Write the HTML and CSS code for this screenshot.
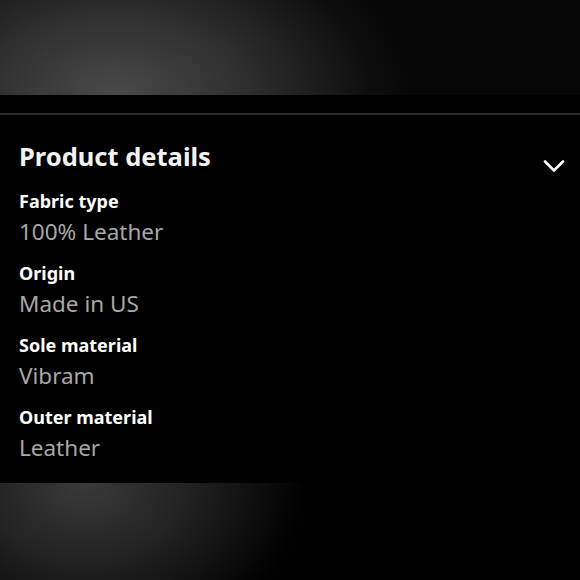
FILE: index.html
```html
<!DOCTYPE html>
<html lang="en">
<head>
  <meta charset="UTF-8" />
  <meta name="viewport" content="width=device-width, initial-scale=1.0" />
  <title>Product details</title>
  <link rel="stylesheet" href="styles.css">
</head>
<body>
  <div class="glow glow-top"></div>
  <div class="spacer"></div>

  <section class="details">
    <div class="details-head">
      <h2>Product details</h2>
      <svg class="chevron" width="22" height="14" viewBox="0 0 22 14">
        <path d="M2 3.5 L11 12.5 L20 3.5" fill="none" stroke="#fff" stroke-width="2.6" stroke-linecap="round" stroke-linejoin="round"/>
      </svg>
    </div>

    <dl class="spec-list">
      <div class="spec">
        <dt>Fabric type</dt>
        <dd>100% Leather</dd>
      </div>
      <div class="spec">
        <dt>Origin</dt>
        <dd>Made in US</dd>
      </div>
      <div class="spec">
        <dt>Sole material</dt>
        <dd>Vibram</dd>
      </div>
      <div class="spec">
        <dt>Outer material</dt>
        <dd>Leather</dd>
      </div>
    </dl>
  </section>

  <div class="glow glow-bottom"></div>
</body>
</html>
```

FILE: styles.css
```css
body {
  margin: 0;
  background: #000;
  color: #fff;
  font-family: 'Noto Sans', 'Open Sans', Arial, sans-serif;
  width: 580px;
  height: 580px;
  overflow: hidden;
}

/* blurred product photo areas */
.glow {
  width: 100%;
}

.glow-top {
  height: 95px;
  background: radial-gradient(ellipse 300px 190px at 115px 95px, #4a4a4a 0%, #2e2e2e 45%, #0e0e0e 85%, #060606 100%);
}

.glow-bottom {
  height: 97px;
  background: radial-gradient(ellipse 220px 170px at 85px 0px, #3a3a3a 0%, #232323 45%, #080808 88%, #000 100%);
}

.spacer {
  height: 18px;
  border-bottom: 2px solid #2a2b2f;
}

.details {
  padding: 25px 15px 0 19px;
  height: 368px;
  box-sizing: border-box;
}

.details-head {
  display: flex;
  align-items: flex-start;
  justify-content: space-between;
}

h2 {
  margin: 0;
  font-size: 25.5px;
  font-weight: bold;
  line-height: 32px;
  color: #f2f2f2;
}

.chevron {
  margin-top: 18px;
}

.spec-list {
  margin: 16px 0 0;
  display: flex;
  flex-direction: column;
  gap: 12px;
}

.spec dt {
  font-size: 18px;
  font-weight: bold;
  line-height: 27px;
}

.spec dd {
  margin: 0;
  font-size: 22.5px;
  line-height: 33px;
  color: #a8a8a8;
}
```
